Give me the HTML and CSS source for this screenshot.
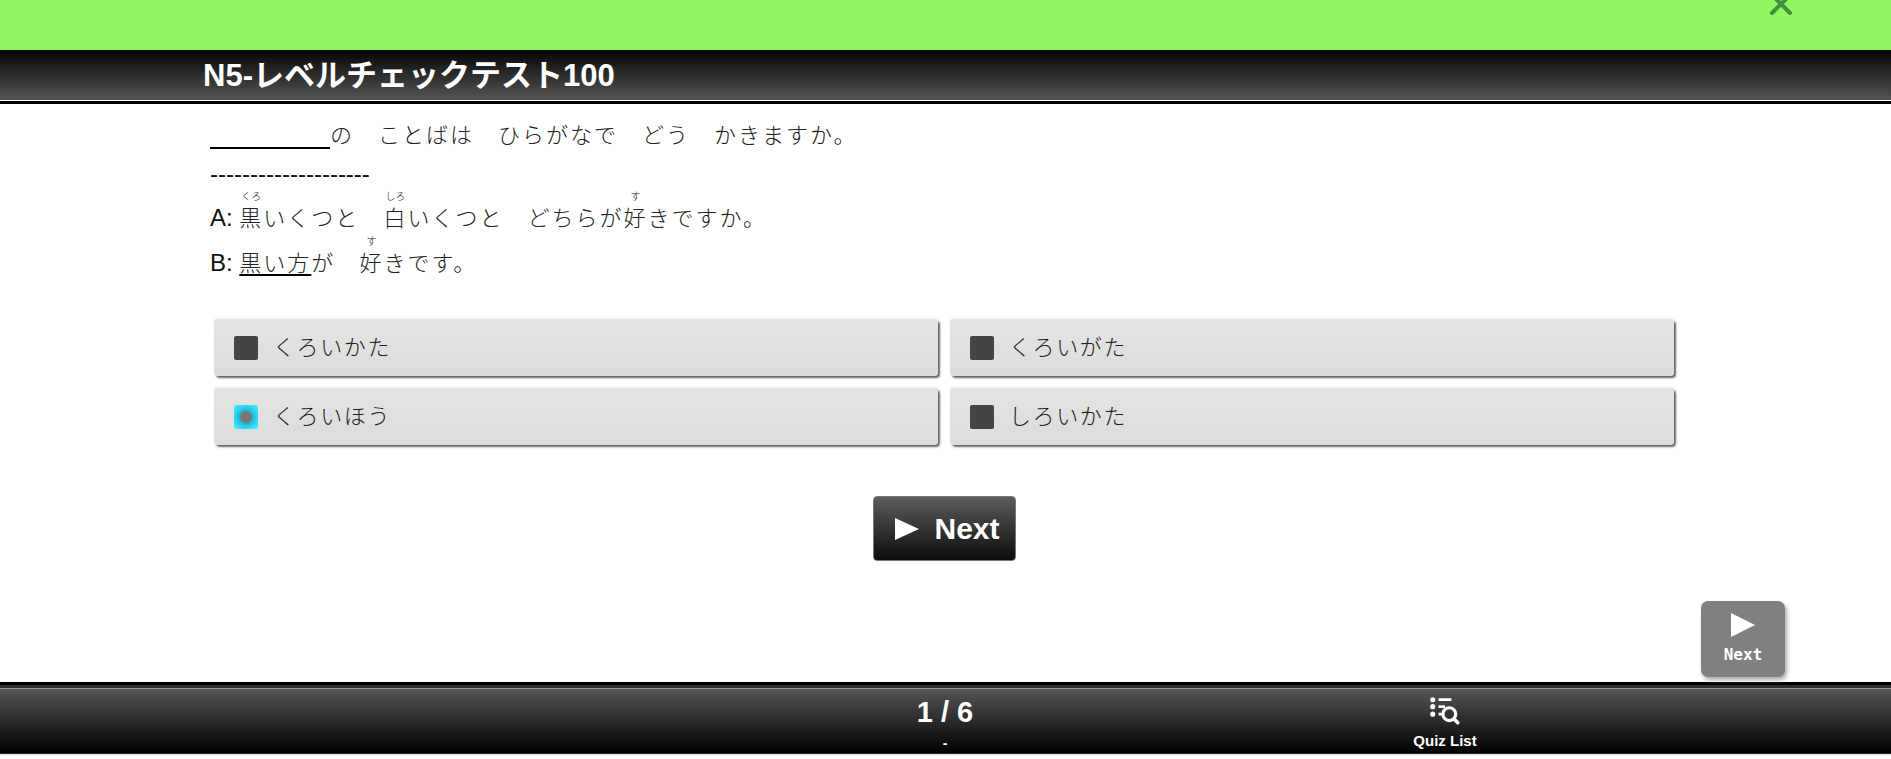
FILE: index.html
```html
<!DOCTYPE html>
<html lang="ja">
<head>
  <meta charset="UTF-8">
  <meta name="viewport" content="width=device-width, initial-scale=1.0">
  <title>N5-レベルチェックテスト100</title>
  <link rel="stylesheet" href="styles.css">
</head>
<body>
  <div class="notice-bar">
    <svg class="notice-close" width="28" height="28" viewBox="0 0 28 28">
      <path d="M5 3 L23 21 M23 3 L5 21" stroke="#3f8f3f" stroke-width="4" stroke-linecap="round" fill="none"/>
    </svg>
  </div>
  <header class="title-bar">
    <h1>N5-レベルチェックテスト100</h1>
  </header>

  <main class="quiz">
    <div class="question">
      <p class="line line-first"><span class="blank"></span><span class="ja">の　ことばは　ひらがなで　どう　かきますか。</span></p>
      <p class="line line-dash">--------------------</p>
      <p class="line line-a">A: <span class="ja"><ruby>黒<rt><span class="kana">くろ</span></rt></ruby>いくつと　<ruby>白<rt><span class="kana">しろ</span></rt></ruby>いくつと　どちらが<ruby>好<rt><span class="kana">す</span></rt></ruby>きですか。</span></p>
      <p class="line line-b">B: <span class="ja"><u>黒い方</u>が　<ruby>好<rt><span class="kana">す</span></rt></ruby>きです。</span></p>
    </div>

    <div class="options">
      <div class="option"><span class="check"></span><span class="ja">くろいかた</span></div>
      <div class="option"><span class="check"></span><span class="ja">くろいがた</span></div>
      <div class="option"><span class="check check-on"></span><span class="ja">くろいほう</span></div>
      <div class="option"><span class="check"></span><span class="ja">しろいかた</span></div>
    </div>

    <button class="next-button">
      <svg width="26" height="24" viewBox="0 0 26 24"><path d="M1 1 L25 12 L1 23 Z" fill="#fff"/></svg>
      <span>Next</span>
    </button>

    <a class="float-next">
      <svg width="26" height="26" viewBox="0 0 26 26"><path d="M1 1 L25 13 L1 25 Z" fill="#fff"/></svg>
      <span>Next</span>
    </a>
  </main>

  <footer class="foot-bar">
    <div class="foot-inner">
      <div class="pager">
        <div class="pager-count">1 / 6</div>
        <div class="pager-sub">-</div>
      </div>
      <div class="quiz-list">
        <svg width="32" height="32" viewBox="0 0 30 30" fill="none" stroke="#fff">
          <circle cx="3.5" cy="3.5" r="2.4" fill="#fff" stroke="none"/>
          <circle cx="3.5" cy="10" r="2.4" fill="#fff" stroke="none"/>
          <circle cx="3.5" cy="17" r="2.4" fill="#fff" stroke="none"/>
          <path d="M9 3.5 H21 M9 10 H15 M9 17 H12" stroke-width="2.6"/>
          <circle cx="19" cy="17" r="6" stroke-width="3"/>
          <path d="M23.5 21.5 L27 25" stroke-width="3.4" stroke-linecap="round"/>
        </svg>
        <span>Quiz List</span>
      </div>
    </div>
  </footer>
</body>
</html>
```

FILE: styles.css
```css
html, body {
  height: 100%;
}

body {
  margin: 0;
  display: flex;
  flex-direction: column;
  height: 100vh;
  overflow: hidden;
  background: #fff;
  font-family: "Liberation Sans", Arial, "Noto Sans CJK JP", sans-serif;
  color: #111;
}

.notice-bar {
  position: relative;
  flex: none;
  height: 50px;
  background: #90f660;
}

.notice-close {
  position: absolute;
  top: -8px;
  right: 96px;
}

.title-bar {
  flex: none;
  height: 51px;
  padding-left: 203px;
  background: linear-gradient(#050505, #555);
  border-bottom: 3px solid #000;
  box-shadow: inset 0 -1px 0 #fff;
}

.title-bar h1 {
  margin: 0;
  font-size: 31px;
  line-height: 51px;
  font-weight: bold;
  color: #fff;
}

.quiz {
  position: relative;
  flex: 1;
  display: flex;
  flex-direction: column;
  padding-left: 210px;
}

.ja {
  font-family: "Noto Sans CJK JP", sans-serif;
  font-weight: 300;
  color: #222;
}

.question {
  font-size: 24px;
}

.line {
  margin: 0;
  white-space: nowrap;
}

.line .ja {
  font-size: 22px;
  letter-spacing: 2px;
}

.line-first {
  height: 42px;
  line-height: 59px;
}

.blank {
  display: inline-block;
  width: 120px;
  height: 22px;
  border-bottom: 2px solid #000;
  vertical-align: -6px;
}

.line-dash {
  height: 32px;
  line-height: 55px;
  font-size: 24px;
}

.line-a {
  height: 45px;
  line-height: 68px;
  margin-top: 4px;
}

.line-b {
  height: 46px;
  line-height: 68px;
}

ruby {
  ruby-position: over;
}

rt {
  font-size: 10px;
  line-height: 12px;
  letter-spacing: 0;
}

.kana {
  display: inline-block;
  padding-bottom: 4px;
  line-height: 12px;
  letter-spacing: 0;
}

.line u {
  text-decoration: underline 1.5px #000;
  text-underline-offset: 3px;
}

.options {
  display: grid;
  grid-template-columns: 724px 724px;
  grid-auto-rows: 57px;
  gap: 12px;
  margin: 46px 0 0 4px;
}

.option {
  display: flex;
  align-items: center;
  gap: 15px;
  padding-left: 20px;
  border-radius: 4px;
  background: linear-gradient(#e4e4e4, #dcdcdc);
  box-shadow: 2px 2px 2px #666, 0 -2px 2px #f4f4f4;
  font-size: 22px;
}

.option .ja {
  letter-spacing: 1.6px;
  line-height: 26px;
  padding-bottom: 5px;
}

.check {
  flex: none;
  width: 24px;
  height: 24px;
  border-radius: 2px;
  background: #444;
}

.check-on {
  background: radial-gradient(circle, #777 30%, #1dbedd 42%, #2fdcf6 70%, #6ae8f8 100%);
}

.next-button {
  display: flex;
  align-items: center;
  justify-content: center;
  gap: 14px;
  width: 143px;
  height: 65px;
  margin: 51px 0 0 663px;
  padding: 0 0 0 5px;
  border: 1px solid #777;
  border-radius: 4px;
  background: linear-gradient(#5c5c5c, #0c0c0c);
  color: #fff;
  font-family: inherit;
  font-size: 30px;
  font-weight: bold;
}

.float-next {
  position: absolute;
  top: 497px;
  left: 1701px;
  display: flex;
  flex-direction: column;
  align-items: center;
  justify-content: center;
  gap: 7px;
  width: 84px;
  height: 74px;
  padding-bottom: 2px;
  border-radius: 7px;
  background: #808080;
  box-shadow: 2px 3px 4px #aaa;
  color: #fff;
  font-family: "DejaVu Sans Mono", monospace;
  font-size: 16px;
  font-weight: bold;
}

.foot-bar {
  flex: none;
  height: 69px;
  margin-bottom: 4px;
  background: #2e2e2e;
  border-top: 3px solid #000;
  border-bottom: 1px solid #ddd;
}

.foot-inner {
  display: grid;
  grid-template-columns: 745px 400px 600px;
  height: 65px;
  margin-top: 3px;
  border-top: 1px solid #999;
  background: linear-gradient(#555, #000);
  color: #fff;
  box-sizing: border-box;
}

.pager {
  grid-column: 2;
  text-align: center;
  font-weight: bold;
}

.pager-count {
  margin-top: 6px;
  font-size: 29px;
  line-height: 34px;
}

.pager-sub {
  font-size: 14px;
  line-height: 18px;
  margin-top: 5px;
}

.quiz-list {
  display: flex;
  flex-direction: column;
  align-items: center;
  padding-top: 7px;
  font-size: 15px;
  font-weight: bold;
  line-height: 18px;
}

.quiz-list span {
  margin-top: 4px;
}
```
